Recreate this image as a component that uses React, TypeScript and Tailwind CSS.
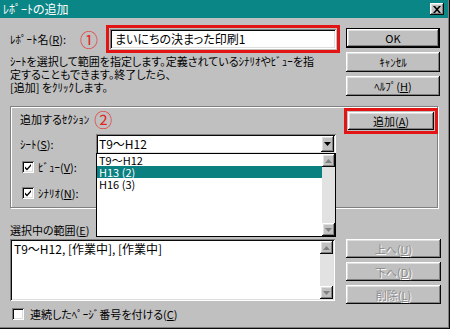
const raised =
  "bg-[#c0c0c0] shadow-[inset_-1px_-1px_#0a0a0a,inset_1px_1px_#ffffff,inset_-2px_-2px_#808080,inset_2px_2px_#dfdfdf]";
const sunken =
  "bg-white shadow-[inset_1px_1px_#808080,inset_-1px_-1px_#ffffff,inset_2px_2px_#0a0a0a,inset_-2px_-2px_#dfdfdf]";

const Arrow = ({ up, dim }: { up?: boolean; dim?: boolean }) => (
  <svg width="7" height="4" viewBox="0 0 7 4">
    <path
      d={up ? "M3.5 0L7 4H0z" : "M0 0h7L3.5 4z"}
      fill={dim ? "#808080" : "#000000"}
    />
  </svg>
);

const ScrollBar = () => (
  <div className="flex w-[13px] flex-col bg-[#e2e2e2]">
    <div className={`${raised} flex h-[13px] items-center justify-center`}>
      <Arrow up dim />
    </div>
    <div className="flex-1" />
    <div className={`${raised} flex h-[13px] items-center justify-center`}>
      <Arrow dim />
    </div>
  </div>
);

const Check = ({ on }: { on?: boolean }) => (
  <div className={`${sunken} flex h-[12px] w-[12px] items-center justify-center`}>
    {on && (
      <svg width="8" height="8" viewBox="0 0 8 8">
        <path d="M1 3.5l2 2 4-4.5v2L3 7.5 1 5.5z" fill="#000000" />
      </svg>
    )}
  </div>
);

const Btn = ({
  children,
  disabled,
  className = "",
}: {
  children: React.ReactNode;
  disabled?: boolean;
  className?: string;
}) => (
  <div
    className={`${raised} flex items-center justify-center ${
      disabled ? "text-[#8a8a8a] [text-shadow:1px_1px_#ffffff]" : "text-black"
    } ${className}`}
  >
    {children}
  </div>
);

export default function App() {
  return (
    <div className="relative h-[329px] w-[450px] overflow-hidden bg-[#c0c0c0] font-['Noto_Sans_CJK_JP','Noto_Sans_CJK_SC',sans-serif] text-[11px] leading-[12px] text-black [font-feature-settings:'palt'] shadow-[inset_-1px_-1px_#0a0a0a,inset_-2px_-2px_#808080]">
      {/* title bar */}
      <div className="mr-[2px] flex h-[18px] items-center justify-between bg-[#0a8686] pl-[3px] pr-[4px]">
        <span className="text-[12px] text-white">ﾚﾎﾟｰﾄの追加</span>
        <div className={`${raised} flex h-[12px] w-[14px] items-center justify-center`}>
          <svg width="8" height="7" viewBox="0 0 8 7">
            <path d="M0 0h2l2 2.3L6 0h2L5 3.5 8 7H6L4 4.7 2 7H0l3-3.5z" fill="#000000" />
          </svg>
        </div>
      </div>

      {/* name + main buttons */}
      <div className="flex pt-[7px]">
        <div className="w-[340px] pl-[10px]">
          <div className="flex h-[28px] items-center">
            <span className="w-[70px]">
              ﾚﾎﾟｰﾄ名(<u>R</u>):
            </span>
            <span className="w-[26px] text-[18px] leading-[18px] text-[#e4231f]">①</span>
            <div className="h-[28px] flex-1 border-[3px] border-[#e31414] p-[1px]">
              <div className={`${sunken} flex h-full items-center pl-[5px] text-[12px]`}>
                まいにちの決まった印刷1
              </div>
            </div>
          </div>
          <div className="mt-[2px] whitespace-nowrap leading-[13px]">
            ｼｰﾄを選択して範囲を指定します。定義されているｼﾅﾘｵやﾋﾞｭｰを指
            <br />
            定することもできます。終了したら、
            <br />
            [追加] をｸﾘｯｸします。
          </div>
        </div>
        <div className="ml-[6px] flex w-[94px] flex-col gap-[4px] pt-[3px]">
          <div className="h-[20px] border border-black">
            <Btn className="h-full">OK</Btn>
          </div>
          <Btn className="h-[20px]">ｷｬﾝｾﾙ</Btn>
          <Btn className="h-[20px]">
            ﾍﾙﾌﾟ(<u>H</u>)
          </Btn>
        </div>
      </div>

      {/* section group */}
      <div className="relative ml-[10px] mt-[10px] h-[102px] w-[428px] border border-[#808080] shadow-[inset_1px_1px_#ffffff,1px_1px_#ffffff]">
        <div className="flex items-start justify-between pt-[1px]">
          <div className="flex items-center pl-[9px] pt-[2px]">
            <span>追加するｾｸｼｮﾝ</span>
            <span className="ml-[5px] text-[18px] leading-[18px] text-[#e4231f]">②</span>
          </div>
          <div className="mr-[-1px] border-[3px] border-[#e31414] p-[1px]">
            <Btn className="h-[18px] w-[86px]">
              追加(<u>A</u>)
            </Btn>
          </div>
        </div>
        <div className="flex items-center">
          <span className="w-[85px] pl-[9px]">
            ｼｰﾄ(<u>S</u>):
          </span>
          <div className={`${sunken} flex h-[20px] w-[240px] items-center justify-between pl-[3px] pr-[2px] text-[12px]`}>
            <span>T9～H12</span>
            <div className={`${raised} flex h-[16px] w-[13px] items-center justify-center`}>
              <Arrow />
            </div>
          </div>
        </div>
        <div className="ml-[11px] mt-[7px] flex items-center gap-[4px]">
          <Check on />
          <span>
            ﾋﾞｭｰ(<u>V</u>):
          </span>
        </div>
        <div className="ml-[11px] mt-[14px] flex items-center gap-[4px]">
          <Check on />
          <span>
            ｼﾅﾘｵ(<u>N</u>):
          </span>
        </div>

        {/* open dropdown */}
        <div className="absolute left-[85px] top-[46px] z-10 flex h-[84px] w-[240px] border border-black bg-white text-[11px]">
          <div className="flex-1">
            <div className="h-[12px] pl-[2px] leading-[12px]">T9～H12</div>
            <div className="h-[12px] bg-[#0a8080] pl-[2px] leading-[12px] text-white">H13 (2)</div>
            <div className="h-[12px] pl-[2px] leading-[12px]">H16 (3)</div>
          </div>
          <ScrollBar />
        </div>
      </div>

      {/* selected range */}
      <div className="ml-[10px] mt-[16px]">
        選択中の範囲(<u>E</u>)
      </div>
      <div className="mt-[3px] flex">
        <div className={`${sunken} ml-[10px] flex h-[62px] w-[325px] p-[2px]`}>
          <div className="flex-1 pl-[2px] pt-[2px] text-[12px]">T9～H12, [作業中], [作業中]</div>
          <ScrollBar />
        </div>
        <div className="ml-[11px] flex w-[95px] flex-col gap-[4px]">
          <Btn disabled className="h-[19px]">
            上へ(<u>U</u>)
          </Btn>
          <Btn disabled className="h-[19px]">
            下へ(<u>D</u>)
          </Btn>
          <Btn disabled className="h-[19px]">
            削除(<u>L</u>)
          </Btn>
        </div>
      </div>

      <div className="ml-[12px] mt-[4px] flex items-center gap-[6px]">
        <Check />
        <span>
          連続したﾍﾟｰｼﾞ番号を付ける(<u>C</u>)
        </span>
      </div>
    </div>
  );
}
